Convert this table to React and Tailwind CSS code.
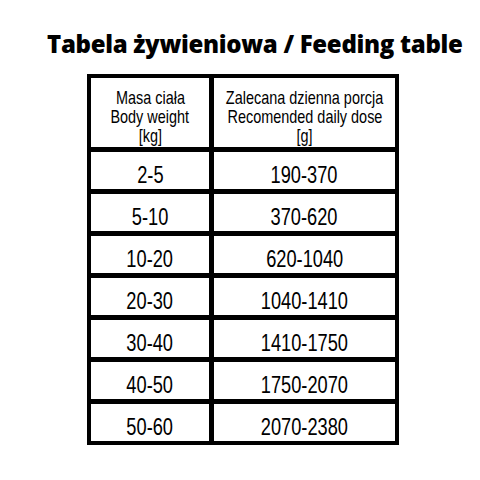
const rows = [
  ["2-5", "190-370"],
  ["5-10", "370-620"],
  ["10-20", "620-1040"],
  ["20-30", "1040-1410"],
  ["30-40", "1410-1750"],
  ["40-50", "1750-2070"],
  ["50-60", "2070-2380"],
];

// condensed look: Liberation Sans squeezed horizontally
const Narrow = ({ children, k = "scale-x-[0.76]" }) => (
  <span className={`inline-block whitespace-nowrap ${k}`}>{children}</span>
);

export default function App() {
  return (
    <div className="w-[480px] h-[480px] bg-white pt-[29px]">
      {/* Title */}
      <h1 className="pl-[47px] text-[24px] leading-[30px] font-extrabold text-black tracking-[-0.3px] font-['Open_Sans',sans-serif]">
        Tabela żywieniowa / Feeding table
      </h1>

      {/* Table */}
      <div className="mt-[15px] ml-[87px] w-fit grid grid-cols-[118px_181px] gap-[5px] bg-black p-[4px] text-black font-['Liberation_Sans',sans-serif]">
        <div className="bg-white h-[69px] pt-[10px] flex flex-col items-center text-[19px] leading-[19px]">
          <Narrow>Masa ciała</Narrow>
          <Narrow>Body weight</Narrow>
          <Narrow>[kg]</Narrow>
        </div>
        <div className="bg-white h-[69px] pt-[10px] flex flex-col items-center text-[19px] leading-[19px]">
          <Narrow>Zalecana dzienna porcja</Narrow>
          <Narrow>Recomended daily dose</Narrow>
          <Narrow>[g]</Narrow>
        </div>

        {rows.map(([w, d], i) => (
          <div key={i} className="contents">
            <div className="bg-white h-[37px] pt-[8px] flex items-center justify-center text-[24px] leading-none">
              <Narrow>{w}</Narrow>
            </div>
            <div className="bg-white h-[37px] pt-[8px] flex items-center justify-center text-[24px] leading-none">
              <Narrow>{d}</Narrow>
            </div>
          </div>
        ))}
      </div>
    </div>
  );
}
